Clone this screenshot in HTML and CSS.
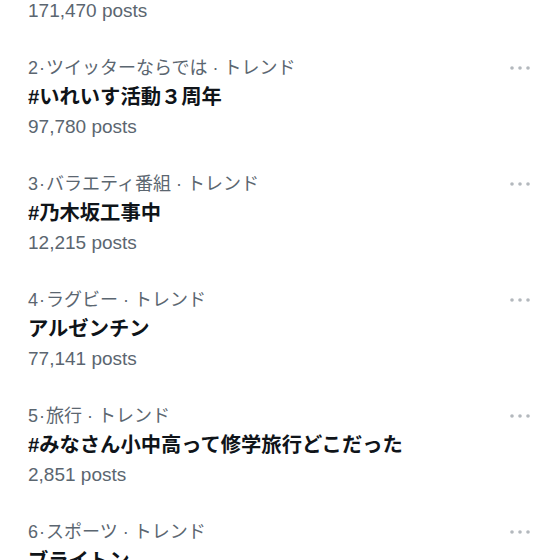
FILE: index.html
```html
<!DOCTYPE html>
<html lang="ja">
<head>
<meta charset="utf-8">
<link rel="stylesheet" href="styles.css">
</head>
<body>
<div class="list">
  <div class="item first">
    <div class="posts">171,470 posts</div>
  </div>
  <div class="item">
    <div class="body">
      <div class="meta">2<span class="sep">·</span>ツイッターならでは · トレンド</div>
      <div class="title">#いれいす活動３周年</div>
      <div class="posts">97,780 posts</div>
    </div>
    <svg class="more" viewBox="0 0 20 4" width="20" height="4"><circle cx="2" cy="2" r="1.8"/><circle cx="10" cy="2" r="1.8"/><circle cx="18" cy="2" r="1.8"/></svg>
  </div>
  <div class="item">
    <div class="body">
      <div class="meta">3<span class="sep">·</span>バラエティ番組 · トレンド</div>
      <div class="title">#乃木坂工事中</div>
      <div class="posts">12,215 posts</div>
    </div>
    <svg class="more" viewBox="0 0 20 4" width="20" height="4"><circle cx="2" cy="2" r="1.8"/><circle cx="10" cy="2" r="1.8"/><circle cx="18" cy="2" r="1.8"/></svg>
  </div>
  <div class="item">
    <div class="body">
      <div class="meta">4<span class="sep">·</span>ラグビー · トレンド</div>
      <div class="title">アルゼンチン</div>
      <div class="posts">77,141 posts</div>
    </div>
    <svg class="more" viewBox="0 0 20 4" width="20" height="4"><circle cx="2" cy="2" r="1.8"/><circle cx="10" cy="2" r="1.8"/><circle cx="18" cy="2" r="1.8"/></svg>
  </div>
  <div class="item">
    <div class="body">
      <div class="meta">5<span class="sep">·</span>旅行 · トレンド</div>
      <div class="title">#みなさん小中高って修学旅行どこだった</div>
      <div class="posts">2,851 posts</div>
    </div>
    <svg class="more" viewBox="0 0 20 4" width="20" height="4"><circle cx="2" cy="2" r="1.8"/><circle cx="10" cy="2" r="1.8"/><circle cx="18" cy="2" r="1.8"/></svg>
  </div>
  <div class="item">
    <div class="body">
      <div class="meta">6<span class="sep">·</span>スポーツ · トレンド</div>
      <div class="title">ブライトン</div>
      <div class="posts">10,000 posts</div>
    </div>
    <svg class="more" viewBox="0 0 20 4" width="20" height="4"><circle cx="2" cy="2" r="1.8"/><circle cx="10" cy="2" r="1.8"/><circle cx="18" cy="2" r="1.8"/></svg>
  </div>
</div>
</body>
</html>
```
FILE: styles.css
```css
html, body {
  margin: 0;
  padding: 0;
  background: #ffffff;
  overflow: hidden;
  height: 560px;
}
body {
  font-family: "Liberation Sans", "Noto Sans CJK JP", sans-serif;
  color: #0f1419;
}
.list {
  display: flex;
  flex-direction: column;
  margin-top: -4px;
}
.item {
  display: flex;
  align-items: flex-start;
  justify-content: space-between;
  padding: 13px 30px 14px 28px;
}
.item.first {
  padding-top: 0;
}
.body {
  display: flex;
  flex-direction: column;
}
.meta {
  font-family: "Liberation Sans", "Noto Sans CJK JP", sans-serif;
  font-size: 18px;
  line-height: 30px;
  color: #5b6670;
  white-space: nowrap;
}
.sep {
  margin: 0 1px;
}
.title {
  font-family: "Liberation Sans", "Noto Sans CJK JP", sans-serif;
  font-size: 20.3px;
  font-weight: 700;
  line-height: 29px;
  color: #0f1419;
  white-space: nowrap;
}
.posts {
  font-size: 19px;
  line-height: 30px;
  color: #5b6670;
  white-space: nowrap;
}
.more {
  fill: #b3b8bd;
  margin-top: 13px;
}
```
